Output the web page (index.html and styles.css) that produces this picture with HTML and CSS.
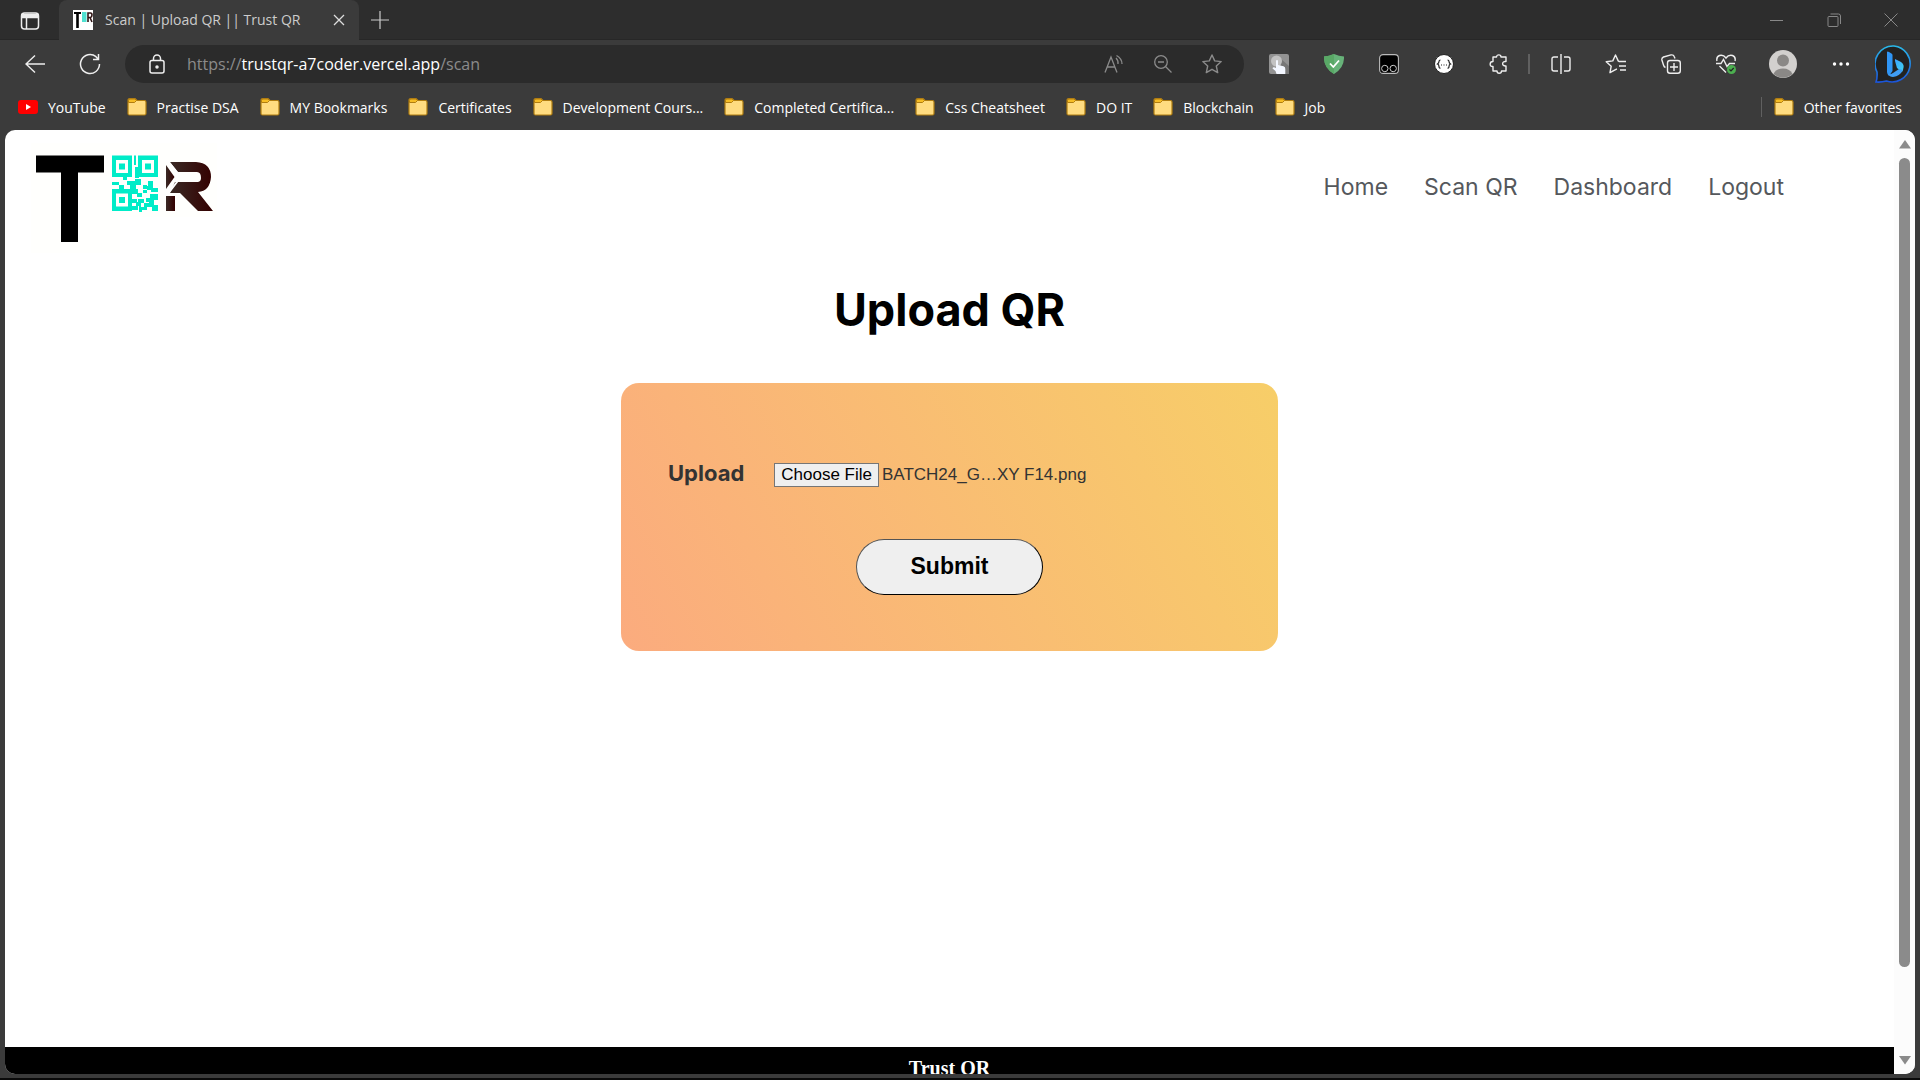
FILE: index.html
```html
<!DOCTYPE html>
<html lang="en">
<head>
<meta charset="utf-8">
<title>Scan | Upload QR || Trust QR</title>
<link rel="stylesheet" href="styles.css">
</head>
<body>
<svg class="defs" aria-hidden="true">
  <symbol id="folder" viewBox="0 0 20 20">
    <path d="M1 3.5Q1 1.500 3 1.500H8L10 3.500H17.500Q19 3.500 19 5V16.500Q19 18 17.500 18H2.500Q1 18 1 16.500Z" fill="#ffdc80" stroke="#b07d10" stroke-width="1.200"/>
    <path d="M1.500 3.500Q1.500 2 3 2H8L9.500 3.500 7.500 5.500H1.500Z" fill="#f6bd25" stroke="#b07d10"/>
  </symbol>
</svg>
<div class="browser">
  <div class="tabstrip">
    <button class="icon-btn workspace" aria-label="Tab actions"><svg width="20" height="20" viewBox="0 0 20 20" fill="none" stroke="#eee" stroke-width="1.500"><rect x="1.500" y="2" width="17" height="16" rx="3"/><path d="M2 3.500H18V6.500H2Z" fill="#eee"/><path d="M6.500 7V18"/></svg></button>
    <div class="tab">
      <svg width="20" height="20" viewBox="0 0 20 20"><path fill="#fff" d="M0 0H20V20H0Z"/><path d="M1 2H8V4H5.800V18H3.200V4H1Z"/><path fill="#4fe0d0" d="M9 2H13.500V12H9Z"/><path d="M15 12V3H17.500Q19 3 19 5T17.500 7.500H15M17 7.500L19 12" fill="none" stroke="#301515" stroke-width="1.600"/></svg>
      <span class="tab-title">Scan | Upload QR || Trust QR</span>
      <button class="icon-btn" aria-label="Close tab"><svg width="12" height="12" viewBox="0 0 12 12" stroke="#ddd" stroke-width="1.300"><path d="M1 1L11 11M11 1L1 11"/></svg></button>
    </div>
    <button class="icon-btn new-tab" aria-label="New tab"><svg width="18" height="18" viewBox="0 0 18 18" stroke="#ccc" stroke-width="1.200"><path d="M9 0V18M0 9H18"/></svg></button>
    <div class="window-controls">
      <button class="icon-btn" aria-label="Minimize"><svg width="14" height="14" viewBox="0 0 14 14" stroke="#888"><path d="M0 7.500H13"/></svg></button>
      <button class="icon-btn" aria-label="Restore"><svg width="14" height="14" viewBox="0 0 14 14" fill="none" stroke="#888"><rect x="1" y="3.500" width="10" height="10" rx="1"/><path d="M3.500 1H11.500Q13.500 1 13.500 3V11"/></svg></button>
      <button class="icon-btn" aria-label="Close"><svg width="14" height="14" viewBox="0 0 14 14" stroke="#888"><path d="M.5 .5L13.500 13.500M13.500 .5L.5 13.500"/></svg></button>
    </div>
  </div>

  <div class="toolbar">
    <button class="icon-btn slot" aria-label="Back"><svg width="20" height="20" viewBox="0 0 20 20" fill="none" stroke="#eee" stroke-width="1.400"><path d="M20 10H1M10 1.500L1 10L10 18.500"/></svg></button>
    <button class="icon-btn slot" aria-label="Refresh"><svg width="22" height="22" viewBox="0 0 22 22" fill="none" stroke="#eee" stroke-width="1.500"><path d="M20.500 11A9.500 9.500 0 1 1 17 3.700L19 6M19.500 1V6.500H14"/></svg></button>
    <div class="address">
      <button class="icon-btn" aria-label="Site information"><svg width="16" height="20" viewBox="0 0 16 20" fill="none" stroke="#eee" stroke-width="1.500"><rect x="1" y="6.500" width="14" height="12.500" rx="2"/><path d="M4.500 6.500V4.500A3.500 3.500 0 0 1 11.500 4.500V6.500"/><circle cx="8" cy="13" r="1" fill="#eee"/></svg></button>
      <span class="url">https://<b>trustqr-a7coder.vercel.app</b>/scan</span>
      <div class="address-actions">
        <button class="icon-btn" aria-label="Read aloud"><svg width="20" height="20" viewBox="0 0 20 20" fill="none" stroke="#8b8b8b" stroke-width="1.300"><path d="M1 18.500L7 3L13 18.500M3.300 13H10.700M12 4Q14.500 6.500 14 10M12.500 1.500Q18 4.500 18 10"/></svg></button>
        <button class="icon-btn" aria-label="Zoom"><svg width="18" height="18" viewBox="0 0 18 18" fill="none" stroke="#8b8b8b" stroke-width="1.300"><circle cx="7" cy="7" r="6.300"/><path d="M11.500 11.500L17.500 17.500M4 7H10"/></svg></button>
        <button class="icon-btn" aria-label="Add to favorites"><svg width="20" height="20" viewBox="0 0 20 20" fill="none" stroke="#8b8b8b" stroke-width="1.400" stroke-linejoin="round"><path d="M10 1L12.700 6.900L19.200 7.600L14.300 12L15.700 18.600L10 15.300L4.300 18.600L5.700 12L.8 7.600L7.300 6.900Z"/></svg></button>
      </div>
    </div>
    <div class="extensions">
      <button class="icon-btn slot" aria-label="Click extension"><svg width="20" height="20" viewBox="0 0 20 20"><rect width="20" height="20" rx="2" fill="#939393"/><path d="M12 5L20 12V20H12Z" fill="#777"/><circle cx="7.500" cy="7" r="5.500" fill="#c2c2c2"/><path d="M7 6.500Q8 5.500 9 6.500V11L14.500 12.300Q16.500 13 16.300 15V20H7.500L6.500 17L3.500 14.500Q4 12.500 7 14Z" fill="#f3f7ff"/></svg></button>
      <button class="icon-btn slot" aria-label="Ad blocker"><svg width="20" height="20" viewBox="0 0 20 20"><path d="M10 0Q15 2 20 2.500Q20.500 14 10 20Q-.5 14 0 2.500Q5 2 10 0Z" fill="#67b279"/><path d="M10 0Q5 2 0 2.500Q-.5 14 10 20Z" fill="#59a866"/><path d="M6 9.500L9.300 13L15 6.500" fill="none" stroke="#fff" stroke-width="1.800"/></svg></button>
      <button class="icon-btn slot" aria-label="Userscripts"><svg width="20" height="20" viewBox="0 0 20 20"><rect x=".6" y=".6" width="18.800" height="18.800" rx="3.500" fill="#000" stroke="#bbb" stroke-width="1.100"/><g fill="none" stroke="#ccc"><circle cx="5.800" cy="14.500" r="3.200"/><circle cx="14.200" cy="14.500" r="3.200"/></g></svg></button>
      <button class="icon-btn slot" aria-label="JSON viewer"><svg width="20" height="20" viewBox="0 0 20 20"><circle cx="10" cy="10" r="9.500" fill="#fff" stroke="#222"/><path d="M6.500 6Q5 6 5 7.500T3.500 10Q5 10.500 5 12.500T6.500 14M13.500 6Q15 6 15 7.500T16.500 10Q15 10.500 15 12.500T13.500 14M7 11H8M9.500 11H10.500M12 11H13" fill="none" stroke="#222" stroke-width="1.200"/></svg></button>
      <button class="icon-btn slot" aria-label="Extensions"><svg width="20" height="20" viewBox="0 0 20 20" fill="none" stroke="#eee" stroke-width="1.400" stroke-linejoin="round"><path d="M4 3H7.500C7.500 .2 12 .2 12 3H17V7.500C12.500 6.800 12.500 12.500 17 12V17H12.500C12.500 20 8 20 8 17H4V12.500C.2 13 .2 7.500 4 7.500Z"/></svg></button>
      <span class="divider"></span>
      <button class="icon-btn slot" aria-label="Split screen"><svg width="20" height="20" viewBox="0 0 20 20" fill="none" stroke="#eee" stroke-width="1.400"><path d="M10 0V20M7 3H3Q1 3 1 5V15Q1 17 3 17H7M13 3H17Q19 3 19 5V15Q19 17 17 17H13"/></svg></button>
      <button class="icon-btn slot" aria-label="Favorites"><svg width="22" height="20" viewBox="0 0 22 20" fill="none" stroke="#eee" stroke-width="1.400" stroke-linejoin="round"><path d="M12 15L11 15.300L5 18.700L6.200 12.200L1.200 7.700L7.800 6.900L10.500 1L13.200 6.900L14 7.500H21M14 12H21M15 16H21"/></svg></button>
      <button class="icon-btn slot" aria-label="Collections"><svg width="20" height="20" viewBox="0 0 20 20" fill="none" stroke="#eee" stroke-width="1.400"><rect x="6.500" y="6.500" width="12.800" height="12.800" rx="2.500"/><path d="M13 9V17M9 13H17M4.500 13.500Q3 13 2.500 11L.9 6Q.5 4 2.500 3L10 .9Q12.500 .5 13.200 2.500L14 4.500"/></svg></button>
      <button class="icon-btn slot" aria-label="Browser essentials"><svg width="20" height="20" viewBox="0 0 20 20" fill="none" stroke="#eee" stroke-width="1.400"><path d="M1 7Q0 3 3.500 1.500Q7.500 .5 10 4Q12.500 .5 16.500 1.500Q20 3 19 7M0 9.500H5L7.500 5.500L11 12.500L13.500 9.500H19M3.500 12L10 18.500"/><circle cx="15.500" cy="15.500" r="4.500" fill="#4caf50" stroke="none"/><path d="M13.500 15.500L15 17L17.700 14" stroke="#222" stroke-width="1.200"/></svg></button>
      <button class="icon-btn slot profile" aria-label="Profile"><svg width="28" height="28" viewBox="0 0 28 28"><circle cx="14" cy="14" r="14" fill="#d2d0ce"/><circle cx="14" cy="10.500" r="6" fill="#8a8886"/><path d="M4.500 24Q7 18.500 14 18.500T23.500 24Q14 31.500 4.500 24Z" fill="#8a8886"/></svg></button>
      <button class="icon-btn slot" aria-label="Settings and more"><svg width="18" height="6" viewBox="0 0 18 6" fill="#fff"><circle cx="2.500" cy="3" r="1.700"/><circle cx="9" cy="3" r="1.700"/><circle cx="15.500" cy="3" r="1.700"/></svg></button>
      <button class="icon-btn bing" aria-label="Bing"><svg width="38" height="38" viewBox="0 0 38 38"><defs><linearGradient id="ring" x1="0" y1="0" x2="0" y2="1"><stop stop-color="#29b9ea"/><stop offset="1" stop-color="#1b55dc"/></linearGradient><linearGradient id="bee" x1="0" y1="0" x2="1" y2="1"><stop stop-color="#3aa0ff"/><stop offset="1" stop-color="#41d6ee"/></linearGradient></defs><path d="M19 1A18 18 0 1 1 11.500 36Q6 37.500 1 37Q2.500 33 2 27A18 18 0 0 1 19 1Z" fill="#222" stroke="url(#ring)" stroke-width="1.600"/><path d="M12 7Q12.500 6 14 7L16.500 8.500Q17.500 9 17.500 10V26L14 31Q12 29 12 27Z" fill="#2f95f5"/><path d="M20 14L26 17Q30 19.500 28 25L27 27L22 23L20 16Z" fill="url(#bee)"/><path d="M13 29Q15 30 18 28L24 24L28 25Q25 31 18 32Q14.500 32 13 29Z" fill="#3f9df5"/></svg></button>
    </div>
  </div>

  <nav class="bookmarks" aria-label="Favorites bar">
    <a href="#"><svg class="bm-icon" viewBox="0 0 20 20"><rect y="3" width="20" height="14" rx="3" fill="#f00"/><path d="M8 7L13 10L8 13Z" fill="#fff"/></svg>YouTube</a>
    <a href="#"><svg class="bm-icon"><use href="#folder"/></svg>Practise DSA</a>
    <a href="#"><svg class="bm-icon"><use href="#folder"/></svg>MY Bookmarks</a>
    <a href="#"><svg class="bm-icon"><use href="#folder"/></svg>Certificates</a>
    <a href="#"><svg class="bm-icon"><use href="#folder"/></svg>Development Cours...</a>
    <a href="#"><svg class="bm-icon"><use href="#folder"/></svg>Completed Certifica...</a>
    <a href="#"><svg class="bm-icon"><use href="#folder"/></svg>Css Cheatsheet</a>
    <a href="#"><svg class="bm-icon"><use href="#folder"/></svg>DO IT</a>
    <a href="#"><svg class="bm-icon"><use href="#folder"/></svg>Blockchain</a>
    <a href="#"><svg class="bm-icon"><use href="#folder"/></svg>Job</a>
    <a href="#" class="other"><svg class="bm-icon"><use href="#folder"/></svg>Other favorites</a>
  </nav>

  <div class="viewport">
    <div class="page">
      <header class="site-header">
        <a href="#" class="logo" aria-label="Trust QR">
          <svg width="186" height="110" viewBox="31 143 186 110">
            <path fill="#fffffd" d="M31 143H217V217H120V253H31Z"/>
            <path d="M36 155.500H104V172.500H78V242H61V172.500H36Z"/>
            <g fill="#00ecc8">
              <path fill-rule="evenodd" d="M112 155.500H132V177H112ZM116 160V173H128V160ZM119 163.500H125V169.500H119Z"/>
              <path fill-rule="evenodd" d="M138 155.500H158V177H138ZM142 160V173H154V160ZM145 163.500H151V169.500H145Z"/>
              <path fill-rule="evenodd" d="M112 189H132V211H112ZM116 193.500V206.500H128V193.500ZM119 197H125V203H119Z"/>
              <path d="M134 155.500H136V165H134ZM135 167H139V178H135ZM123 177H127V180H123ZM112 182H119V185H112ZM119 185H124V189H119ZM127 181H135V179H141V185H136V189H130V185H127ZM132 189H138V193H142V197H137V194H132ZM143 185H147V189H143ZM148 181H153V188H158V192H151V190H147V193H143V190H147V186H148ZM150 194H158V200H154V205H158V211H152V207H149V202H146V198H150ZM132 199H137V203H132ZM138 199H144V203H141V207H147V210H139V206H136V202H138ZM132 206H138V210H132ZM139 208H142V212H139ZM144 203H149V207H144Z"/>
            </g>
            <defs><linearGradient id="rg"><stop stop-color="#3a2a25"/><stop offset="1" stop-color="#340000"/></linearGradient></defs>
            <g fill="url(#rg)">
              <path d="M170 162H196Q211 163 211 177Q210 191 198 192L213 211H198L180 193H170L175 182H198Q201 181.500 201 178Q201 172 197 172H178Z"/>
              <path d="M166 165L174.500 177L166 189ZM166 196H175V211H166Z"/>
            </g>
            <path d="M167 160L177 172.500V182L167 195" fill="none" stroke="#fff" stroke-width="2"/>
          </svg>
        </a>
        <nav class="site-nav">
          <a href="#">Home</a><a href="#">Scan QR</a><a href="#">Dashboard</a><a href="#">Logout</a>
        </nav>
      </header>
      <main>
        <h1>Upload QR</h1>
        <form class="card">
          <div class="field">
            <label for="qr-file">Upload</label>
            <input type="file" id="qr-file">
          </div>
          <button type="submit" class="submit">Submit</button>
        </form>
      </main>
      <footer>Trust QR</footer>
    </div>
    <div class="scrollbar" aria-hidden="true">
      <svg width="12" height="9" viewBox="0 0 12 9"><path d="M6 0L12 8.500H0Z" fill="#8b8b8b"/></svg>
      <div class="track"><div class="thumb"></div></div>
      <svg width="12" height="9" viewBox="0 0 12 9"><path d="M0 0H12L6 8.500Z" fill="#8b8b8b"/></svg>
    </div>
  </div>
</div>
<script src="script.js"></script>
</body>
</html>
```
FILE: styles.css
```css
* { box-sizing: border-box; }
body { margin: 0; background: #000; }
.defs { position: absolute; width: 0; height: 0; }
.browser {
  display: flex;
  flex-direction: column;
  height: 100vh;
  background: #3b3b3b;
  border-bottom: 2px solid #0a0a0a;
  font-family: "Open Sans", "Noto Sans", sans-serif;
  font-size: 14px;
  color: #fff;
  overflow: hidden;
}
.icon-btn {
  display: flex;
  align-items: center;
  justify-content: center;
  padding: 0;
  border: 0;
  background: none;
}
.slot { width: 55px; flex: none; }
.profile { width: 60px; }
.bing { width: 52px; }

.tabstrip {
  display: flex;
  flex: none;
  height: 40px;
  background: #2d2d2d;
  border-bottom: 1px solid #272727;
}
.workspace { width: 59px; padding-top: 2px; }
.tab {
  display: flex;
  align-items: center;
  width: 300px;
  height: 40px;
  padding: 0 14px 1px;
  gap: 12px;
  border-radius: 8px 8px 0 0;
  background: #3b3b3b;
}
.tab-title { flex: 1; white-space: nowrap; color: #ccc; }
.new-tab { width: 42px; }
.window-controls { display: flex; gap: 43px; margin-left: auto; padding-right: 22px; }

.toolbar { display: flex; flex: none; align-items: center; height: 48px; padding-left: 7px; }
.address {
  display: flex;
  flex: 1;
  align-items: center;
  height: 38px;
  margin-left: 8px;
  padding: 0 22px 0 24px;
  border-radius: 19px;
  background: #2b2b2b;
}
.url { margin-left: 22px; font-size: 16px; color: #8b8b8b; }
.url b { font-weight: 400; color: #fff; }
.address-actions { display: flex; align-items: center; gap: 30px; margin-left: auto; }
.extensions { display: flex; align-items: center; padding-left: 7px; }
.divider { width: 2px; height: 20px; margin: 0 3px 0 2px; background: #606060; }

.bookmarks {
  display: flex;
  flex: none;
  align-items: center;
  gap: 21px;
  height: 42px;
  padding: 0 18px 4px;
}
.bookmarks a {
  display: flex;
  align-items: center;
  gap: 10px;
  white-space: nowrap;
  color: #fff;
  text-decoration: none;
}
.bm-icon { width: 20px; height: 20px; }
.bookmarks .other { margin-left: auto; padding-left: 12px; border-left: 1px solid #606060; }

.viewport {
  display: flex;
  flex: 1;
  min-height: 0;
  margin: 0 5px 4px;
  border-radius: 10px;
  overflow: hidden;
  background: #fff;
  color: #000;
}
.page { display: flex; flex: 1; flex-direction: column; overflow: hidden; }
.site-header {
  display: flex;
  flex: none;
  justify-content: space-between;
  height: 123px;
  padding: 13px 110px 0 26px;
  font-family: Inter, sans-serif;
}
.logo { display: block; }
.site-nav { display: flex; gap: 36px; padding-top: 29px; }
.site-nav a { font-size: 23px; line-height: 30px; color: #55585c; text-decoration: none; }
main { flex: 1; font-family: Inter, sans-serif; text-align: center; }
h1 { margin: 28px 0 44px; font-size: 45px; font-weight: 700; line-height: 58px; }
.card {
  display: flex;
  flex-direction: column;
  align-items: center;
  gap: 51px;
  width: 657px;
  max-width: 100%;
  margin: 0 auto;
  padding: 74px 47px 56px;
  border-radius: 18px;
  background: linear-gradient(62deg, #fbab7e 0%, #f7ce68 100%);
}
.field { display: flex; align-items: center; align-self: stretch; gap: 30px; height: 31px; color: #333; }
.field label { font-size: 22px; font-weight: 700; line-height: 30px; }
.field input { flex: 1; padding-top: 5px; font: 17px/20px "Liberation Sans", Arial, sans-serif; }
.field input::file-selector-button {
  margin: 0 3px 0 0;
  padding: 1px 6px;
  border: 1px solid #767676;
  border-radius: 0;
  background: #efefef;
  color: #000;
  font: inherit;
}
.submit {
  width: 187px;
  height: 56px;
  padding: 0 0 2px;
  border: 1px outset #000;
  border-radius: 28px;
  background: #efefef;
  color: #000;
  font: bold 23px/28px "Liberation Sans", Arial, sans-serif;
}
footer {
  flex: none;
  height: 27px;
  padding-top: 9px;
  background: #000;
  color: #fff;
  font: bold 20px/24px "Liberation Serif", "Times New Roman", serif;
  text-align: center;
  overflow: hidden;
}
.scrollbar {
  display: flex;
  flex: none;
  flex-direction: column;
  align-items: center;
  gap: 9px;
  width: 21px;
  padding: 10px 0 9px;
  background: #fcfcfc;
}
.track { flex: 1; width: 11px; }
.thumb { height: 91%; border-radius: 6px; background: #8b8b8b; }
```
FILE: script.js
```js
const chosen = new DataTransfer();
chosen.items.add(new File([""], "BATCH24_G…XY F14.png", { type: "image/png" }));
document.getElementById("qr-file").files = chosen.files;
```
